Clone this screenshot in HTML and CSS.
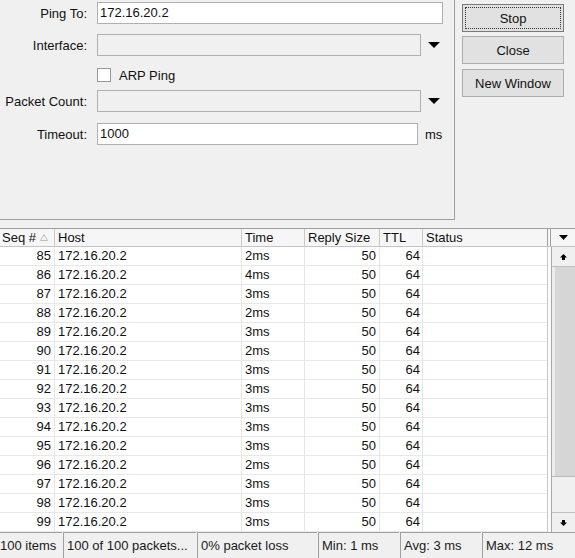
FILE: index.html
```html
<html>
    <head>
        <title>Ping</title>
        <link rel="stylesheet" href="styles.css">
    </head>
    <body>
        <div class="window">
            <div class="top">
                <div class="form">
                    <div class="row">
                        <span class="label">Ping To:</span>
                        <div class="field field-text field-ping">172.16.20.2</div>
                    </div>
                    <div class="row row-interface">
                        <span class="label">Interface:</span>
                        <div class="field field-select"></div>
                        <svg class="drop" width="12" height="6"><path d="M0 0H12L6 6Z"/></svg>
                    </div>
                    <div class="row row-arp">
                        <span class="label"></span>
                        <span class="checkbox"></span>
                        <span class="check-label">ARP Ping</span>
                    </div>
                    <div class="row row-count">
                        <span class="label">Packet Count:</span>
                        <div class="field field-select"></div>
                        <svg class="drop" width="12" height="6"><path d="M0 0H12L6 6Z"/></svg>
                    </div>
                    <div class="row row-timeout">
                        <span class="label">Timeout:</span>
                        <div class="field field-text field-timeout">1000</div>
                        <span class="unit">ms</span>
                    </div>
                </div>
                <div class="buttons">
                    <button class="button button-default"><span>Stop</span></button>
                    <button class="button"><span>Close</span></button>
                    <button class="button"><span>New Window</span></button>
                </div>
            </div>

            <div class="list">
                <div class="list-head">
                    <div class="head-cell">Seq # <svg class="sort" width="8" height="7"><path d="M4 0.5L7.5 6.5H0.5Z"/></svg></div>
                    <div class="head-cell">Host</div>
                    <div class="head-cell">Time</div>
                    <div class="head-cell">Reply Size</div>
                    <div class="head-cell">TTL</div>
                    <div class="head-cell head-last">Status</div>
                    <div class="head-menu"><svg width="9" height="5"><path d="M0 0H9L4.5 5Z"/></svg></div>
                </div>
                <div class="list-body">
                    <div class="rows">
                        <div class="item"><span class="num">85</span><span>172.16.20.2</span><span>2ms</span><span class="num">50</span><span class="num ttl">64</span><span></span></div>
                        <div class="item"><span class="num">86</span><span>172.16.20.2</span><span>4ms</span><span class="num">50</span><span class="num ttl">64</span><span></span></div>
                        <div class="item"><span class="num">87</span><span>172.16.20.2</span><span>3ms</span><span class="num">50</span><span class="num ttl">64</span><span></span></div>
                        <div class="item"><span class="num">88</span><span>172.16.20.2</span><span>2ms</span><span class="num">50</span><span class="num ttl">64</span><span></span></div>
                        <div class="item"><span class="num">89</span><span>172.16.20.2</span><span>3ms</span><span class="num">50</span><span class="num ttl">64</span><span></span></div>
                        <div class="item"><span class="num">90</span><span>172.16.20.2</span><span>2ms</span><span class="num">50</span><span class="num ttl">64</span><span></span></div>
                        <div class="item"><span class="num">91</span><span>172.16.20.2</span><span>3ms</span><span class="num">50</span><span class="num ttl">64</span><span></span></div>
                        <div class="item"><span class="num">92</span><span>172.16.20.2</span><span>3ms</span><span class="num">50</span><span class="num ttl">64</span><span></span></div>
                        <div class="item"><span class="num">93</span><span>172.16.20.2</span><span>3ms</span><span class="num">50</span><span class="num ttl">64</span><span></span></div>
                        <div class="item"><span class="num">94</span><span>172.16.20.2</span><span>3ms</span><span class="num">50</span><span class="num ttl">64</span><span></span></div>
                        <div class="item"><span class="num">95</span><span>172.16.20.2</span><span>3ms</span><span class="num">50</span><span class="num ttl">64</span><span></span></div>
                        <div class="item"><span class="num">96</span><span>172.16.20.2</span><span>2ms</span><span class="num">50</span><span class="num ttl">64</span><span></span></div>
                        <div class="item"><span class="num">97</span><span>172.16.20.2</span><span>3ms</span><span class="num">50</span><span class="num ttl">64</span><span></span></div>
                        <div class="item"><span class="num">98</span><span>172.16.20.2</span><span>3ms</span><span class="num">50</span><span class="num ttl">64</span><span></span></div>
                        <div class="item"><span class="num">99</span><span>172.16.20.2</span><span>3ms</span><span class="num">50</span><span class="num ttl">64</span><span></span></div>
                    </div>
                    <div class="strip"></div>
                    <div class="scrollbar">
                        <div class="scroll-btn"><svg width="7" height="6"><path d="M3.5 0L7 3.5H5V6H2V3.5H0Z"/></svg></div>
                        <div class="track"></div>
                        <div class="thumb"></div>
                        <div class="scroll-btn"><svg width="7" height="6"><path d="M3.5 6L7 2.5H5V0H2V2.5H0Z"/></svg></div>
                    </div>
                </div>
            </div>

            <div class="status">
                <div class="seg seg-first">100 items</div>
                <div class="seg seg-packets">100 of 100 packets...</div>
                <div class="seg seg-loss">0% packet loss</div>
                <div class="seg seg-min">Min: 1 ms</div>
                <div class="seg seg-avg">Avg: 3 ms</div>
                <div class="seg seg-max">Max: 12 ms</div>
            </div>
        </div>
    </body>
</html>
```

FILE: styles.css
```css
* {
    margin: 0;
    box-sizing: border-box;
}

body {
    padding: 0;
    background-color: #f0f0f0;
    font-family: "Liberation Sans", Arial, sans-serif;
    font-size: 13px;
    color: #111111;
    overflow: hidden;
}

.window {
    width: 575px;
    height: 558px;
    display: flex;
    flex-direction: column;
}

/* top part: form and buttons */

.top {
    display: flex;
    height: 220px;
}

.form {
    width: 455px;
    height: 220px;
    padding-top: 2px;
    border-right: 1px solid #a0a0a0;
    border-bottom: 1px solid #a0a0a0;
    display: flex;
    flex-direction: column;
}

.row {
    display: flex;
    align-items: center;
    height: 22px;
}

.row-interface {
    margin-top: 10px;
}

.row-arp {
    margin-top: 8px;
}

.row-count {
    margin-top: 4px;
}

.row-timeout {
    margin-top: 11px;
}

.label {
    width: 87px;
    margin-right: 10px;
    text-align: right;
    white-space: nowrap;
}

.field {
    height: 22px;
    border: 1px solid #b0b0b0;
    padding-left: 2px;
    line-height: 20px;
}

.field-text {
    background-color: white;
}

.field-ping {
    width: 346px;
}

.field-timeout {
    width: 321px;
}

.field-select {
    width: 324px;
    background-color: #f0f0f0;
}

.drop {
    margin-left: 7px;
    fill: black;
}

.unit {
    margin-left: 7px;
}

.checkbox {
    width: 14px;
    height: 14px;
    background-color: white;
    border: 1px solid #9a9a9a;
}

.check-label {
    margin-left: 8px;
}

.buttons {
    flex: 1;
    display: flex;
    flex-direction: column;
    gap: 4px;
    padding: 4px 0 0 7px;
}

.button {
    width: 102px;
    height: 28px;
    background-color: #e1e1e1;
    border: 1px solid #adadad;
    font-family: inherit;
    font-size: 13px;
    color: #111111;
    padding: 0;
}

.button-default {
    border-color: #7a7a7a;
    padding: 2px;
}

.button-default span {
    display: flex;
    align-items: center;
    justify-content: center;
    height: 100%;
    border: 1px dotted #333333;
}

.button + .button + .button {
    margin-top: 1px;
}

/* list of replies */

.list {
    margin-top: 8px;
}

.list-head {
    display: flex;
    height: 19px;
    border-top: 1px solid #a0a0a0;
    border-bottom: 1px solid #c4c4c4;
    background-color: #f6f6f6;
}

.head-cell {
    display: flex;
    align-items: center;
    padding-left: 3px;
    border-right: 1px solid #c8c8c8;
    white-space: nowrap;
}

.head-cell:nth-child(1) { width: 55px; padding-left: 2px; }
.head-cell:nth-child(2) { width: 187px; }
.head-cell:nth-child(3) { width: 63px; }
.head-cell:nth-child(4) { width: 75px; }
.head-cell:nth-child(5) { width: 43px; }
.head-cell:nth-child(6) { width: 125px; }

.head-last {
    border-right: 1px solid #a0a0a0;
}

.sort {
    margin-left: 4px;
    fill: none;
    stroke: #bdbdbd;
}

.head-menu {
    flex: 1;
    margin-left: 2px;
    border-left: 1px solid #a0a0a0;
    display: flex;
    align-items: center;
    justify-content: center;
}

.list-body {
    display: flex;
    height: 285px;
}

.rows {
    width: 548px;
    background-color: white;
    border-right: 1px solid #c8c8c8;
}

.item {
    display: grid;
    grid-template-columns: 55px 187px 63px 75px 43px 1fr;
    height: 19px;
    border-bottom: 1px solid #e8e8e8;
    line-height: 18px;
}

.item span {
    padding-left: 3px;
    border-right: 1px solid #e6e6e6;
    white-space: nowrap;
}

.item span:last-child {
    border-right: none;
}

.item .num {
    text-align: right;
    padding-left: 0;
    padding-right: 3px;
}

.item .ttl {
    padding-right: 2px;
}

.strip {
    width: 3px;
    background-color: #fafafa;
}

.scrollbar {
    flex: 1;
    display: flex;
    flex-direction: column;
    border-left: 1px solid #a8a8a8;
}

.scroll-btn {
    height: 20px;
    display: flex;
    align-items: center;
    justify-content: center;
    background-color: #f0f0f0;
    border-bottom: 1px solid #c0c0c0;
}

.scroll-btn:last-child {
    border-bottom: none;
    border-top: 1px solid #c0c0c0;
}

.track {
    flex: 1;
    background-color: #d6d6d6;
    border-left: 3px solid #ececec;
}

.thumb {
    height: 36px;
    background-color: #f0f0f0;
    border-top: 1px solid #b8b8b8;
}

/* status bar */

.status {
    flex: 1;
    display: flex;
    gap: 1px;
}

.seg {
    display: flex;
    align-items: center;
    padding-left: 3px;
    border-left: 1px solid #a0a0a0;
    border-top: 1px solid #a0a0a0;
    color: #1a1a1a;
    white-space: nowrap;
}

.seg-first {
    width: 62px;
    padding-left: 0;
    border-left: none;
}

.seg-packets { width: 133px; }
.seg-loss { width: 120px; }
.seg-min { width: 81px; }
.seg-avg { width: 81px; }
.seg-max { flex: 1; }
```
